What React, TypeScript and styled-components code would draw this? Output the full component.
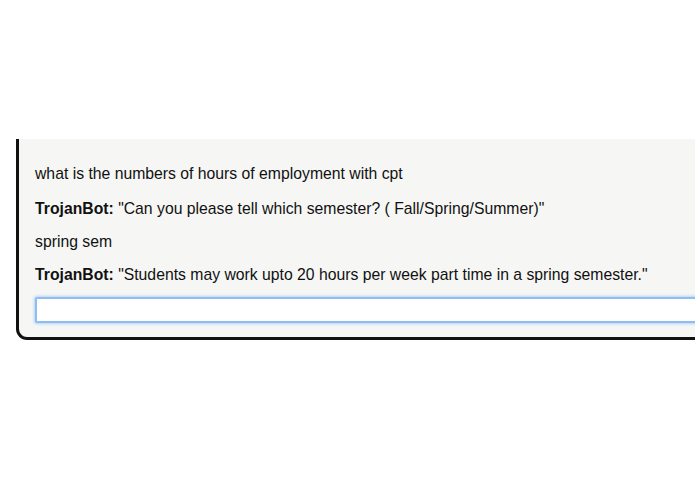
import React from "react";
import styled, { createGlobalStyle } from "styled-components";

const Global = createGlobalStyle`
  html, body { margin: 0; padding: 0; background: #ffffff; overflow: hidden; }
  body { font-family: "Liberation Sans", Arial, Helvetica, sans-serif; }
`;

const Page = styled.div`
  width: 695px;
  height: 494px;
  padding-top: 139px;
  box-sizing: border-box;
  overflow: hidden;
`;

const ChatPanel = styled.section`
  margin-left: 16px;
  width: 760px;
  background: #f6f7f5;
  border-left: 3px solid #111;
  border-bottom: 3px solid #111;
  border-bottom-left-radius: 11px;
  padding: 26px 0 14px 16px;
  box-sizing: border-box;
`;

const Message = styled.p`
  margin: 0 0 15px;
  font-size: 15.75px;
  line-height: 18px;
  color: #111;

  &:first-child {
    margin-bottom: 17px;
  }

  &:last-of-type {
    margin-bottom: 13px;
  }
`;

const Sender = styled.strong`
  font-weight: bold;
`;

const ChatInput = styled.input`
  display: block;
  width: 740px;
  height: 26px;
  box-sizing: border-box;
  margin: 0;
  border: 2px solid #8fbdf0;
  border-radius: 2px;
  background: #fff;
  outline: none;
  box-shadow: 0 0 3px 1px #b3d3f6;
`;

const messages: { bot: boolean; text: string }[] = [
  { bot: false, text: "what is the numbers of hours of employment with cpt" },
  { bot: true, text: '"Can you please tell which semester? ( Fall/Spring/Summer)"' },
  { bot: false, text: "spring sem" },
  { bot: true, text: '"Students may work upto 20 hours per week part time in a spring semester."' },
];

export default function App() {
  return (
    <>
      <Global />
      <Page>
        <ChatPanel>
          {messages.map((m, i) => (
            <Message key={i}>
              {m.bot && <Sender>TrojanBot:</Sender>}
              {m.bot ? " " : ""}
              {m.text}
            </Message>
          ))}
          <ChatInput type="text" />
        </ChatPanel>
      </Page>
    </>
  );
}
